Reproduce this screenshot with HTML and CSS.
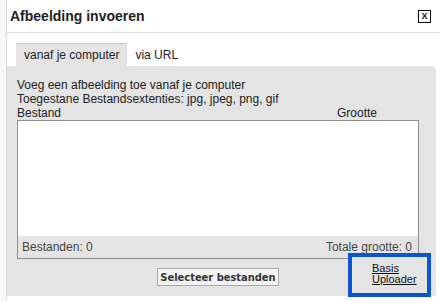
FILE: index.html
```html
<!DOCTYPE html>
<html>
<head>
    <title>Afbeelding invoeren</title>
    <link rel="stylesheet" href="styles.css">
</head>
<body>
    <div class="page">
        <div class="backdrop"></div>
        <div class="dialog">
            <div class="dialog-header">
                <h2>Afbeelding invoeren</h2>
                <span class="close">X</span>
            </div>

            <div class="tabs">
                <span class="tab active">vanaf je computer</span>
                <span class="tab">via URL</span>
            </div>

            <div class="panel">
                <p>Voeg een afbeelding toe vanaf je computer</p>
                <p>Toegestane Bestandsextenties: jpg, jpeg, png, gif</p>
                <div class="file-head">
                    <span class="col-name">Bestand</span>
                    <span class="col-size">Grootte</span>
                </div>
                <div class="file-list"></div>
                <div class="file-foot">
                    <span>Bestanden: 0</span>
                    <span>Totale grootte: 0</span>
                </div>
                <div class="actions">
                    <button type="button">Selecteer bestanden</button>
                    <a class="basic-link" href="#">Basis<br>Uploader</a>
                </div>
            </div>
        </div>
    </div>
</body>
</html>
```

FILE: styles.css
```css
body {
    margin: 0;
    background: #fff;
    font-family: "Liberation Sans", Arial, sans-serif;
    color: #222;
}
.page {
    display: flex;
    height: 301px;
    overflow: hidden;
}
.backdrop {
    width: 6px;
    background: #f8f8f8;
    border-right: 1px solid #dcdcdc;
}
.dialog {
    width: 433px;
}
.dialog-header {
    display: flex;
    justify-content: space-between;
    align-items: center;
    height: 32px;
    padding: 0 9px 0 3px;
    border-bottom: 1px solid #ddd;
}
.dialog-header h2 {
    margin: 0;
    font-size: 14px;
    font-weight: bold;
    color: #222;
}
.close {
    width: 11px;
    height: 11px;
    border: 1px solid #111;
    font-size: 9px;
    font-weight: bold;
    line-height: 11px;
    text-align: center;
    color: #111;
}
.tabs {
    display: flex;
    margin: 10px 0 0 9px;
}
.tab {
    height: 22px;
    line-height: 22px;
    padding: 0 8px;
    font-size: 12px;
    color: #222;
    background: #fff;
    border-top: 1px solid #fff;
}
.tab.active {
    background: #e4e4e4;
    border-top-color: #c6c6c6;
}
.panel {
    width: 402px;
    padding: 12px 17px 10px 10px;
    background: #e4e4e4;
    border-top-right-radius: 5px;
    font-size: 12px;
}
.panel p {
    margin: 0;
    line-height: 14px;
}
.file-head {
    display: flex;
    line-height: 14px;
}
.col-name {
    flex: 1;
}
.col-size {
    width: 82px;
}
.file-list {
    height: 115px;
    background: #fff;
    border: 1px solid #8e8e8e;
    border-bottom: none;
}
.file-foot {
    display: flex;
    justify-content: space-between;
    height: 22px;
    line-height: 22px;
    padding: 0 6px 0 4px;
    border: 1px solid #8e8e8e;
    border-top: none;
    color: #444;
}
.actions {
    position: relative;
    display: flex;
    justify-content: center;
    margin-top: 9px;
}
button {
    height: 18px;
    padding: 0 2px;
    background: #f3f3f3;
    border: 1px solid #aaa;
    font-family: "DejaVu Sans Condensed", "DejaVu Sans", sans-serif;
    font-size: 11px;
    font-weight: bold;
    color: #333;
}
.basic-link {
    position: absolute;
    right: -12px;
    top: -15px;
    width: 55px;
    height: 30px;
    padding: 6px 0 0 20px;
    border: 4px solid #0c55cf;
    background: #e4e4e4;
    font-size: 11px;
    line-height: 11px;
    color: #111;
}
```
